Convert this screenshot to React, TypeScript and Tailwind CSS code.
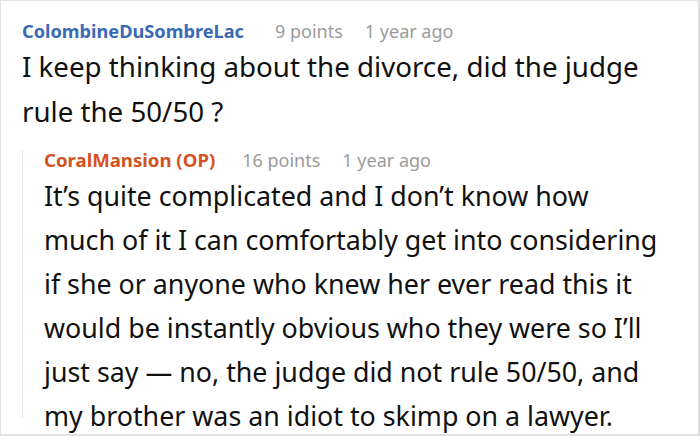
const parentLines = ['I keep thinking about the divorce, did the judge', 'rule the 50/50 ?'];

const replyLines = [
  'It’s quite complicated and I don’t know how',
  'much of it I can comfortably get into considering',
  'if she or anyone who knew her ever read this it',
  'would be instantly obvious who they were so I’ll',
  'just say — no, the judge did not rule 50/50, and',
  'my brother was an idiot to skimp on a lawyer.',
];

export default function App() {
  return (
    <div
      className="w-[700px] h-[436px] overflow-hidden bg-white border-l border-t border-r-2 border-b-2 border-[#e2e2e2] pl-[21px] pr-[10px] pt-[17px]"
      style={{ fontFamily: '"Noto Sans", "Open Sans", sans-serif' }}
    >
      {/* parent comment */}
      <div className="flex items-baseline text-[18px] leading-[26px] whitespace-nowrap">
        <span className="font-bold text-[18.2px] text-[#3a6ab4]">ColombineDuSombreLac</span>
        <span className="ml-[31px] text-[#9b9b9b]">9 points</span>
        <span className="ml-[22px] text-[#9b9b9b]">1 year ago</span>
      </div>
      <p className="text-[27.7px] leading-[45px] text-[#111]">
        {parentLines.map((l) => (
          <span key={l} className="block whitespace-nowrap">
            {l}
          </span>
        ))}
      </p>

      {/* reply */}
      <div className="mt-[16px] h-[268px] border-l border-[#e6e6e6] pl-[21px]">
        <div className="flex items-baseline text-[18px] leading-[20px] whitespace-nowrap">
          <span className="font-bold text-[18.6px] text-[#d4521f]">CoralMansion (OP)</span>
          <span className="ml-[27px] text-[#9b9b9b]">16 points</span>
          <span className="ml-[22px] text-[#9b9b9b]">1 year ago</span>
        </div>
        <p className="mt-[4px] text-[26.8px] leading-[44px] text-[#111]">
          {replyLines.map((l) => (
            <span key={l} className="block whitespace-nowrap">
              {l}
            </span>
          ))}
        </p>
      </div>
    </div>
  );
}
